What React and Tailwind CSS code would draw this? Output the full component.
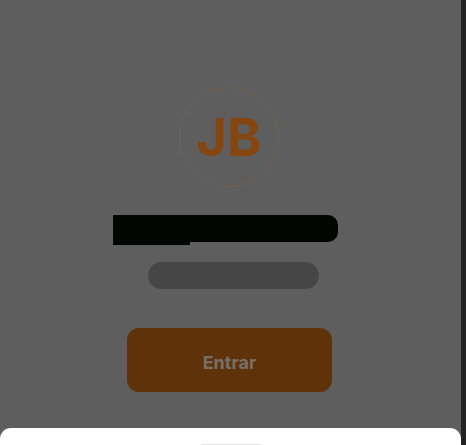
export default function App() {
  return (
    <div className="relative flex h-[445px] w-[466px] overflow-hidden" style={{ fontFamily: 'Inter, "Noto Sans", sans-serif' }}>
      <div className="flex w-[461px] flex-col bg-[#5e5e5e]">
        <div className="ml-[179px] mt-[87px] flex h-[100px] w-[100px] items-center justify-center rounded-full border border-[#74604f]">
          <span className="pt-[2px] text-[52px] font-bold leading-none text-[#864610]">JB</span>
        </div>
        <div className="ml-[113px] mt-[28px] flex flex-col">
          <div className="h-[27px] w-[225px] rounded-r-[10px] rounded-l-[1px] bg-[#010603]" />
          <div className="h-[3px] w-[77px] bg-[#010603]" />
        </div>
        <div className="ml-[148px] mt-[17px] h-[27px] w-[171px] rounded-full bg-[#464646]" />
        <div className="ml-[127px] mt-[39px] flex h-[64px] w-[205px] items-center justify-center rounded-[12px] bg-[#5f3209]">
          <span className="pt-[4px] text-[18px] font-bold text-[#77706a]">Entrar</span>
        </div>
      </div>
      <div className="w-[5px] bg-[#232323]" />
      <div className="absolute left-0 top-[428px] flex h-[40px] w-[461px] flex-col items-center rounded-t-[11px] bg-white">
        <div className="mt-[16px] h-[5px] w-[62px] rounded-full bg-[#e3e3e3]" />
      </div>
    </div>
  );
}
